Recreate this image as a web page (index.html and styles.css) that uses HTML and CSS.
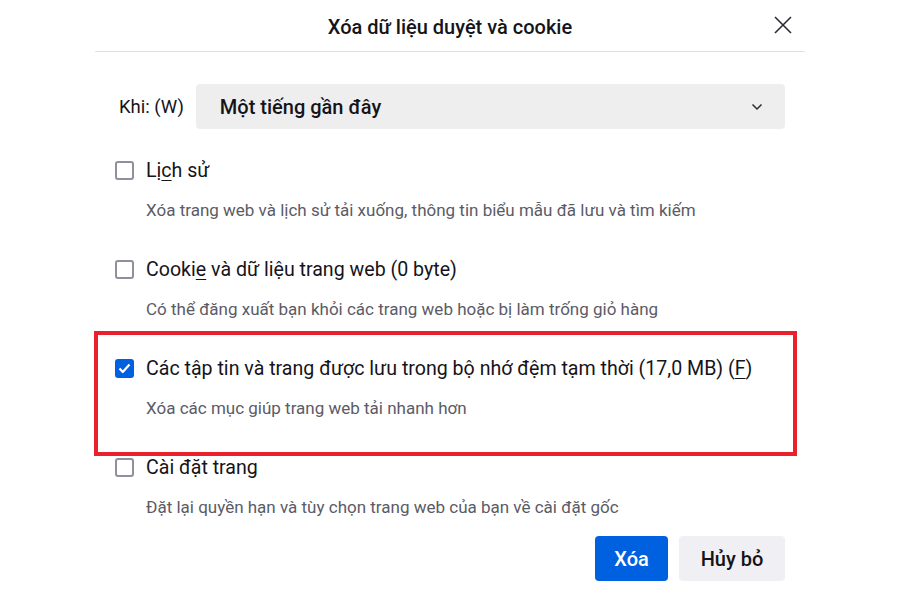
FILE: index.html
```html
<!DOCTYPE html>
<html lang="vi">
<head>
<meta charset="utf-8">
<title>Xóa dữ liệu duyệt và cookie</title>
<link rel="stylesheet" href="styles.css">
</head>
<body>
<div class="dialog">
  <header class="head">
    <h1 class="title">Xóa dữ liệu duyệt và cookie</h1>
    <button class="close" aria-label="Đóng">
      <svg width="18" height="18" viewBox="0 0 18 18"><path d="M1 1 L17 17 M17 1 L1 17" stroke="#2b2a33" stroke-width="1.6" fill="none"/></svg>
    </button>
  </header>
  <div class="body">
    <div class="when">
      <span class="when-label">Khi: (W)</span>
      <div class="select">
        <span>Một tiếng gần đây</span>
        <svg width="12" height="8" viewBox="0 0 12 8"><path d="M1.5 1.5 L6 6 L10.5 1.5" stroke="#2b2a33" stroke-width="1.5" fill="none"/></svg>
      </div>
    </div>
    <div class="item">
      <div class="row"><span class="box"></span><span class="label">Lị<u>c</u>h sử</span></div>
      <div class="desc">Xóa trang web và lịch sử tải xuống, thông tin biểu mẫu đã lưu và tìm kiếm</div>
    </div>
    <div class="item">
      <div class="row"><span class="box"></span><span class="label">Cooki<u>e</u> và dữ liệu trang web (0 byte)</span></div>
      <div class="desc">Có thể đăng xuất bạn khỏi các trang web hoặc bị làm trống giỏ hàng</div>
    </div>
    <div class="item marked">
      <div class="row"><span class="box checked"><svg width="13" height="11" viewBox="0 0 13 11"><path d="M1.5 5.5 L4.8 9 L11.5 1.5" stroke="#fff" stroke-width="2.2" fill="none" stroke-linejoin="round"/></svg></span><span class="label">Các tập tin và trang được lưu trong bộ nhớ đệm tạm thời (17,0 MB) (<u>F</u>)</span></div>
      <div class="desc">Xóa các mục giúp trang web tải nhanh hơn</div>
    </div>
    <div class="item">
      <div class="row"><span class="box"></span><span class="label">Cài đặt trang</span></div>
      <div class="desc">Đặt lại quyền hạn và tùy chọn trang web của bạn về cài đặt gốc</div>
    </div>
    <div class="actions">
      <button class="btn primary">Xóa</button>
      <button class="btn">Hủy bỏ</button>
    </div>
  </div>
</div>
</body>
</html>
```
FILE: styles.css
```css
* { box-sizing: border-box; }
html, body { margin: 0; padding: 0; background: #fff; }
body {
  font-family: Roboto, "Noto Sans", sans-serif;
  color: #15141a;
}
.dialog {
  width: 710px;
  margin-left: 95px;
}
.head {
  height: 52px;
  border-bottom: 1px solid #e0e0e6;
  display: flex;
  align-items: center;
  justify-content: center;
  position: relative;
}
.title {
  margin: 0;
  font-size: 20px;
  font-weight: 500;
  padding-top: 2px;
}
.close {
  position: absolute;
  right: 13px;
  top: 16px;
  background: none;
  border: 0;
  padding: 0;
  width: 18px;
  height: 18px;
  display: flex;
}
.body {
  padding: 32px 20px 0 20px;
}
.when {
  display: flex;
  align-items: center;
  gap: 12px;
}
.when-label {
  font-size: 18.5px;
  padding-left: 4px;
}
.select {
  flex: 1;
  height: 45px;
  background: #eeeeef;
  border-radius: 4px;
  display: flex;
  align-items: center;
  justify-content: space-between;
  padding: 0 22px 0 24px;
  font-size: 20px;
  font-weight: 500;
}
.item {
  margin-top: 29px;
  margin-bottom: 8px;
}
.item + .item { margin-top: 37px; }
.row {
  display: flex;
  align-items: center;
  height: 24px;
  gap: 12px;
}
.box {
  width: 19px;
  height: 19px;
  border: 2px solid #8f8f9d;
  border-radius: 3px;
  display: flex;
  align-items: center;
  justify-content: center;
}
.box.checked {
  background: #0061e0;
  border-color: #0061e0;
}
.label {
  font-size: 19.6px;
}
.label u { text-decoration-thickness: 1px; text-underline-offset: 3px; }
.desc {
  margin-top: 18px;
  padding-left: 31px;
  font-size: 17px;
  line-height: 20px;
  color: #5b5b66;
}
.marked { position: relative; }
.marked::after {
  content: "";
  position: absolute;
  left: -21px;
  right: -12px;
  top: -25px;
  bottom: -38px;
  border: 4px solid #e8212c;
  pointer-events: none;
}
.actions {
  display: flex;
  justify-content: flex-end;
  gap: 11px;
  margin-top: 19px;
}
.btn {
  height: 45px;
  border: 0;
  border-radius: 4px;
  background: #f0f0f4;
  color: #15141a;
  font-family: Roboto, "Noto Sans", sans-serif;
  font-size: 20px;
  font-weight: 500;
  padding: 0 20px;
  min-width: 106px;
}
.btn.primary {
  background: #0061e0;
  color: #fff;
  padding: 0 18px;
  min-width: 73px;
}
```
